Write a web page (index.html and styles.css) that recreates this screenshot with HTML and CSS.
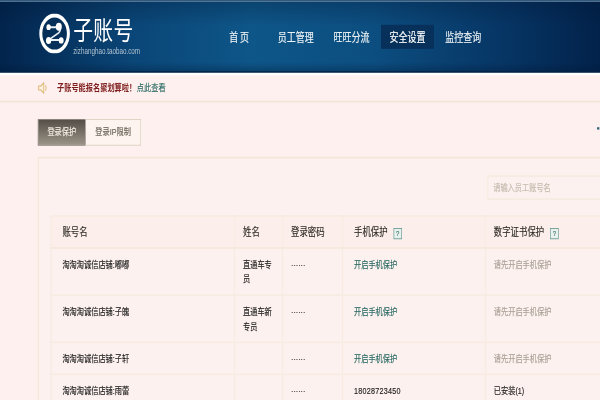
FILE: index.html
```html
<!DOCTYPE html>
<html lang="zh-CN">
<head>
<meta charset="utf-8">
<title>子账号</title>
<link rel="stylesheet" href="styles.css">
</head>
<body>
<div class="page">
  <header class="header">
    <div class="logo">
      <svg class="logo-mark" viewBox="0 0 52 50" aria-hidden="true">
        <ellipse cx="26" cy="25" rx="23" ry="22.5" fill="#06305a" stroke="#fff" stroke-width="5"/>
        <path d="M16 17H33Q38 20 33 24L16 33H37" fill="none" stroke="#e8eef2" stroke-width="2.4"/>
        <circle cx="16" cy="17" r="3.6" fill="#fff"/>
        <circle cx="33" cy="16.5" r="5" fill="#fff"/>
        <circle cx="16" cy="33.5" r="4.4" fill="#fff"/>
        <circle cx="37" cy="33.5" r="4" fill="#fff"/>
      </svg>
      <div class="logo-text">
        <div class="logo-title">子账号</div>
        <div class="logo-url">zizhanghao.taobao.com</div>
      </div>
    </div>
    <nav class="nav">
      <a class="nav-item nav-home">首页</a>
      <a class="nav-item">员工管理</a>
      <a class="nav-item">旺旺分流</a>
      <a class="nav-item is-active">安全设置</a>
      <a class="nav-item">监控查询</a>
    </nav>
  </header>
  <div class="notice">
    <svg class="speaker" viewBox="0 0 18 16" aria-hidden="true">
      <path d="M1.5 5.5H5L10 1.5V14.5L5 10.5H1.5Z" fill="#fbf0dc" stroke="#dfb36c" stroke-width="1.4"/>
      <path d="M13 4.5Q15 8 13 11.5" fill="none" stroke="#dfb36c" stroke-width="1.4"/>
    </svg>
    <span class="notice-text">子账号能报名聚划算啦！</span>
    <a class="link">点此查看</a>
  </div>
  <main class="main">
    <div class="tabs">
      <a class="tab is-current">登录保护</a>
      <a class="tab">登录IP限制</a>
    </div>
    <span class="edge-mark"></span>
    <section class="panel">
      <div class="search">请输入员工账号名</div>
      <table class="table">
        <colgroup>
          <col class="c1"><col class="c2"><col class="c3"><col class="c4"><col class="c5">
        </colgroup>
        <thead>
          <tr>
            <th class="wide-pad">账号名</th>
            <th>姓名</th>
            <th>登录密码</th>
            <th class="wide-pad">手机保护 <span class="help">?</span></th>
            <th>数字证书保护 <span class="help">?</span></th>
          </tr>
        </thead>
        <tbody>
          <tr class="tall">
            <td class="wide-pad">淘淘淘诚信店铺:嘟嘟</td>
            <td>直通车专员</td>
            <td>······</td>
            <td class="wide-pad"><a class="link">开启手机保护</a></td>
            <td class="muted">请先开启手机保护</td>
          </tr>
          <tr class="tall">
            <td class="wide-pad">淘淘淘诚信店铺:子魄</td>
            <td>直通车新专员</td>
            <td>······</td>
            <td class="wide-pad"><a class="link">开启手机保护</a></td>
            <td class="muted">请先开启手机保护</td>
          </tr>
          <tr>
            <td class="wide-pad">淘淘淘诚信店铺:子轩</td>
            <td></td>
            <td>······</td>
            <td class="wide-pad"><a class="link">开启手机保护</a></td>
            <td class="muted">请先开启手机保护</td>
          </tr>
          <tr>
            <td class="wide-pad">淘淘淘诚信店铺:雨蕾</td>
            <td></td>
            <td>······</td>
            <td class="wide-pad"><span class="phone">18028723450</span></td>
            <td>已安装(1)</td>
          </tr>
        </tbody>
      </table>
    </section>
  </main>
</div>
</body>
</html>
```
FILE: styles.css
```css
* { box-sizing: border-box; }
html, body { margin: 0; height: 400px; overflow: hidden; background: #fdf0ee; }
.page {
  position: relative;
  width: 1000px;
  height: 500px;
  overflow: hidden;
  transform: scale(0.6, 0.8);
  transform-origin: 0 0;
  filter: blur(0.35px);
  font-family: "Liberation Sans", "Noto Sans CJK SC", sans-serif;
  font-size: 12px;
  line-height: 18px;
  color: #222;
  background: #fdf0ee;
  -webkit-text-stroke: 0.2px currentColor;
}
.header {
  display: flex;
  height: 94px;
  padding-left: 65px;
  border-top: 2px solid #2f5a7e;
  border-bottom: 3px solid #fff;
  background:
    linear-gradient(180deg, rgba(0, 20, 50, 0.28) 0%, rgba(0, 20, 50, 0) 35%, rgba(0, 30, 70, 0) 85%, rgba(0, 20, 50, 0.35) 100%),
    linear-gradient(90deg, #02244c 0%, #0a4677 22%, #0e5688 42%, #0c4e80 62%, #063463 85%, #02224a 100%);
  box-shadow: inset 0 -2px 0 #032045;
}
.logo { display: flex; align-items: flex-start; width: 303px; padding-top: 15px; }
.logo-mark { width: 52px; height: 50px; flex: none; }
.logo-text { margin-left: 5px; color: #fff; }
.logo-title { font-size: 33px; line-height: 36px; margin-top: 4px; letter-spacing: 0.5px; -webkit-text-stroke: 0; }
.logo-url { font-size: 10.5px; line-height: 14px; margin-top: 0; color: #b4c5d2; -webkit-text-stroke: 0; }
.nav { display: flex; gap: 5px; align-items: flex-start; padding-top: 29px; }
.nav-item {
  height: 30px;
  padding: 0 14px;
  font-size: 15px;
  line-height: 32px;
  color: #eef3f5;
}
.nav-home { letter-spacing: 3px; margin-right: 12px; }
.nav-item.is-active { background: #07305a; color: #fff; }
.notice {
  display: flex;
  align-items: center;
  height: 34px;
  padding-left: 63px;
  border-bottom: 2px solid #f3e5d6;
}
.speaker { width: 18px; height: 16px; flex: none; margin-right: 14px; }
.notice-text { color: #7d1c1c; font-weight: 700; -webkit-text-stroke: 0; }
.link { color: #2a6a63; }
.notice .link { margin-left: 1px; }
.main { position: relative; padding: 21px 0 0 63px; }
.tabs { display: flex; width: 172px; height: 33px; }
.tab {
  width: 92px;
  line-height: 30px;
  text-align: center;
  color: #6a6458;
  background: #fdf4f0;
  border: 1px solid #d8cdbc;
  border-left: 0;
}
.tab.is-current {
  width: 80px;
  color: #f4eee6;
  background: linear-gradient(180deg, #554f48, #9b9387);
  border: 1px solid #6f6a60;
}
.edge-mark {
  position: absolute;
  right: 1px;
  top: 31px;
  width: 4px;
  height: 3px;
  background: #3b6a80;
}
.panel {
  margin-top: 14px;
  width: 1000px;
  height: 320px;
  padding: 21px 0 0 19px;
  border: 2px solid #f4e7d8;
  background: #fdf1ef;
}
.search {
  width: 220px;
  height: 31px;
  margin-left: 728px;
  padding-left: 8px;
  line-height: 28px;
  color: #c4bcae;
  border: 2px solid #f6ebe0;
}
.table {
  table-layout: fixed;
  width: 964px;
  margin-top: 19px;
  border-collapse: collapse;
}
.c1 { width: 306px; }
.c2 { width: 80px; }
.c3 { width: 100px; }
.c4 { width: 238px; }
.c5 { width: 240px; }
th, td {
  padding: 11px 13px 0;
  vertical-align: top;
  text-align: left;
  font-weight: 400;
  border: 2px solid #f7ebe2;
  height: 40px;
}
th {
  padding-top: 9px;
  font-size: 14px;
  line-height: 20px;
  color: #2e2a26;
  background: #fcefeb;
  border-bottom-color: #f6e6da;
}
.wide-pad { padding-left: 18px; }
.tall td { height: 59px; }
.muted { color: #aaa397; }
.phone { letter-spacing: 0.4px; }
.help {
  display: inline-block;
  width: 14px;
  height: 14px;
  margin-left: 6px;
  border: 1px solid #5f938f;
  background: #e8f1ec;
  font-size: 10px;
  line-height: 12px;
  text-align: center;
  color: #3f7671;
  vertical-align: 0;
}
```
